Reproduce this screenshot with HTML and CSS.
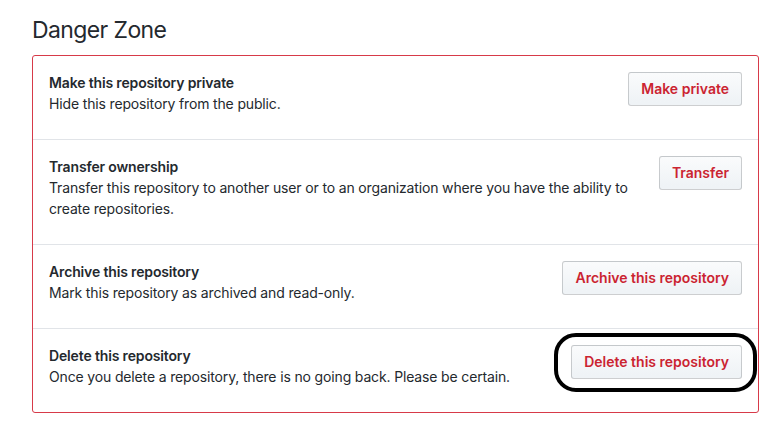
FILE: index.html
```html
<!DOCTYPE html>
<html>
<head>
<meta charset="utf-8">
<link rel="stylesheet" href="styles.css">
</head>
<body>
<div class="page">
  <h2 class="heading">Danger Zone</h2>
  <div class="box">
    <div class="row">
      <div class="info">
        <strong class="title">Make this repository private</strong>
        <p class="desc">Hide this repository from the public.</p>
      </div>
      <button class="btn">Make private</button>
    </div>
    <div class="row">
      <div class="info">
        <strong class="title">Transfer ownership</strong>
        <p class="desc">Transfer this repository to another user or to an organization where you have the ability to create repositories.</p>
      </div>
      <button class="btn">Transfer</button>
    </div>
    <div class="row">
      <div class="info">
        <strong class="title">Archive this repository</strong>
        <p class="desc">Mark this repository as archived and read-only.</p>
      </div>
      <button class="btn">Archive this repository</button>
    </div>
    <div class="row">
      <div class="info">
        <strong class="title">Delete this repository</strong>
        <p class="desc">Once you delete a repository, there is no going back. Please be certain.</p>
      </div>
      <div class="btn-wrap">
        <button class="btn">Delete this repository</button>
        <span class="highlight"></span>
      </div>
    </div>
  </div>
</div>
</body>
</html>
```
FILE: styles.css
```css
html, body {
  margin: 0;
  padding: 0;
  background: #fff;
}
body {
  font-family: Inter, "Helvetica Neue", Arial, sans-serif;
  font-size: 14px;
  line-height: 21px;
  color: #24292e;
  letter-spacing: -0.15px;
}
.page {
  padding: 12px 16px 0 32px;
}
.heading {
  margin: 0 0 7px 0;
  font-size: 23px;
  line-height: 36px;
  font-weight: 400;
  letter-spacing: -0.6px;
  color: #24292e;
}
.box {
  border: 1px solid #d73a49;
  border-radius: 3px;
}
.row {
  display: flex;
  align-items: flex-start;
  justify-content: space-between;
  padding: 16px;
  border-top: 1px solid #e1e4e8;
}
.row:first-child {
  border-top: none;
}
.info {
  flex: 1;
  max-width: 590px;
}
.title {
  display: block;
  font-weight: 600;
}
.desc {
  margin: 0 0 9px 0;
}
.btn {
  flex: none;
  font-family: inherit;
  font-size: 14px;
  font-weight: 600;
  line-height: 20px;
  letter-spacing: 0;
  padding: 6px 12px;
  color: #cb2431;
  background: linear-gradient(#fafbfc, #eff3f6 90%);
  border: 1px solid rgba(27, 31, 35, 0.2);
  border-radius: 3px;
  cursor: pointer;
}
.btn-wrap {
  position: relative;
  flex: none;
}
.btn-wrap .btn {
  display: block;
}
.highlight {
  position: absolute;
  left: -17px;
  right: -15px;
  top: -12px;
  bottom: -13px;
  border: 4px solid #000;
  border-radius: 22px;
}
```
